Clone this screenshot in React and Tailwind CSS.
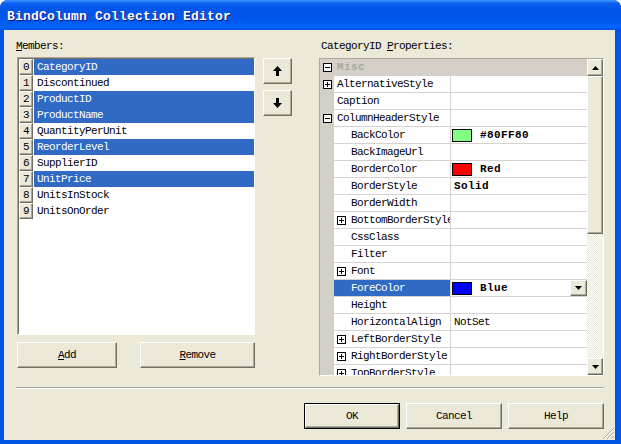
import React from 'react';

const mono = "font-['Liberation_Mono',monospace] text-[11px] tracking-[-0.6px]";
const raised =
  'border border-t-white border-l-white border-b-[#716f64] border-r-[#716f64] shadow-[inset_-1px_-1px_0_#aca899] bg-[#ece9d8]';

const members = [
  'CategoryID',
  'Discontinued',
  'ProductID',
  'ProductName',
  'QuantityPerUnit',
  'ReorderLevel',
  'SupplierID',
  'UnitPrice',
  'UnitsInStock',
  'UnitsOnOrder',
];
const selected = [0, 2, 3, 5, 7];

// level 0 = top-level, 1 = sub-property; exp: 'plus' | 'minus'
const props = [
  { name: 'AlternativeStyle', level: 0, exp: 'plus' },
  { name: 'Caption', level: 0 },
  { name: 'ColumnHeaderStyle', level: 0, exp: 'minus' },
  { name: 'BackColor', level: 1, swatch: '#80ff80', value: '#80FF80', bold: true },
  { name: 'BackImageUrl', level: 1 },
  { name: 'BorderColor', level: 1, swatch: '#ff0000', value: 'Red', bold: true },
  { name: 'BorderStyle', level: 1, value: 'Solid', bold: true },
  { name: 'BorderWidth', level: 1 },
  { name: 'BottomBorderStyle', level: 1, exp: 'plus' },
  { name: 'CssClass', level: 1 },
  { name: 'Filter', level: 1 },
  { name: 'Font', level: 1, exp: 'plus' },
  { name: 'ForeColor', level: 1, swatch: '#0000ff', value: 'Blue', bold: true, active: true },
  { name: 'Height', level: 1 },
  { name: 'HorizontalAlign', level: 1, value: 'NotSet' },
  { name: 'LeftBorderStyle', level: 1, exp: 'plus' },
  { name: 'RightBorderStyle', level: 1, exp: 'plus' },
  { name: 'TopBorderStyle', level: 1, exp: 'plus' },
];

const Expander = ({ type }) => (
  <svg width="9" height="9" viewBox="0 0 9 9" className="shrink-0">
    <rect x="0.5" y="0.5" width="8" height="8" fill="white" stroke="#000" />
    <line x1="2" y1="4.5" x2="7" y2="4.5" stroke="#000" />
    {type === 'plus' && <line x1="4.5" y1="2" x2="4.5" y2="7" stroke="#000" />}
  </svg>
);

const Tri = ({ down }) => (
  <svg width="7" height="4" viewBox="0 0 7 4">
    {down ? <polygon points="0,0 7,0 3.5,4" fill="#000" /> : <polygon points="0,4 7,4 3.5,0" fill="#000" />}
  </svg>
);

const Arrow = ({ down }) => (
  <svg width="9" height="10" viewBox="0 0 9 10" className={down ? 'rotate-180' : ''}>
    <polygon points="4.5,0 9,5 6,5 6,10 3,10 3,5 0,5" fill="#000" />
  </svg>
);

const Button = ({ children, className = '' }) => (
  <div className={`${raised} flex items-center justify-center ${mono} text-black ${className}`}>{children}</div>
);

const PropRow = ({ p }) => (
  <div className="flex h-[17px] shrink-0">
    <div className="w-[14px] bg-[#d4d0c8] flex items-center justify-center">
      {p.level === 0 && p.exp && <Expander type={p.exp} />}
    </div>
    <div
      className={`w-[117px] flex items-center pl-[3px] border-r border-b border-[#d6d3ce] whitespace-nowrap overflow-hidden ${
        p.active ? 'bg-[#316ac5] text-white' : 'bg-white text-black'
      }`}
    >
      {p.level === 1 && (
        <span className="w-[14px] shrink-0 flex">{p.exp && <Expander type={p.exp} />}</span>
      )}
      <span>{p.name}</span>
    </div>
    <div className="flex-1 flex items-center bg-white border-b border-[#d6d3ce] whitespace-nowrap overflow-hidden">
      {p.swatch && (
        <span className="ml-[1px] w-[20px] h-[13px] border border-black shrink-0" style={{ background: p.swatch }} />
      )}
      {p.value && (
        <span
          className={`${p.swatch ? 'ml-[8px]' : 'ml-[3px]'} ${p.bold ? 'font-bold tracking-[0.4px]' : ''}`}
        >
          {p.value}
        </span>
      )}
      {p.active && (
        <span className={`${raised} ml-auto w-[17px] h-[16px] flex items-center justify-center`}>
          <Tri down />
        </span>
      )}
    </div>
  </div>
);

export default function App() {
  return (
    <div className="w-[621px] h-[444px] bg-[#0054e3] rounded-t-[8px] flex flex-col overflow-hidden relative">
      {/* title bar */}
      <div className="h-[30px] shrink-0 flex items-center pl-[7px] pt-[3px] bg-[linear-gradient(180deg,#3d95ff_0%,#0a5ff0_12%,#0055ea_35%,#0058ee_70%,#0066ff_90%,#0050e0_100%)]">
        <span className="font-['Liberation_Mono',monospace] text-[13px] font-bold tracking-[0.2px] text-white [text-shadow:1px_1px_0_#0a1883]">
          BindColumn Collection Editor
        </span>
      </div>

      {/* body */}
      <div className={`mx-[4px] mr-[6px] mb-[4px] flex-1 bg-[#ece9d8] flex flex-col pl-[13px] pr-[11px] pt-[9px] ${mono} text-black`}>
        <div className="flex">
          {/* members column */}
          <div className="w-[238px] flex flex-col">
            <div className="h-[12px] leading-[12px] -ml-[1px] mt-[1px]">
              <span className="underline">M</span>embers:
            </div>
            <div className="mt-[5px] h-[278px] bg-white border border-t-[#aca899] border-l-[#aca899] border-b-white border-r-white shadow-[inset_1px_1px_0_#716f64] pt-[1px] pl-[1px]">
              {members.map((m, i) => {
                const sel = selected.includes(i);
                return (
                  <div key={m} className="flex h-[16px]">
                    <div className={`${raised} w-[14px] flex items-center justify-center text-black`}>{i}</div>
                    <div
                      className={`flex-1 ml-[1px] pl-[3px] flex items-center ${
                        sel ? 'bg-[#316ac5] text-white' : 'text-black'
                      }`}
                    >
                      {m}
                    </div>
                  </div>
                );
              })}
            </div>
            <div className="mt-[7px] flex justify-between">
              <Button className="w-[100px] h-[26px]">
                <span className="underline">A</span>dd
              </Button>
              <Button className="w-[115px] h-[26px]">
                <span className="underline">R</span>emove
              </Button>
            </div>
          </div>

          {/* up / down */}
          <div className="ml-[8px] w-[29px] flex flex-col gap-[6px] pt-[19px]">
            <Button className="h-[26px]">
              <Arrow />
            </Button>
            <Button className="h-[26px]">
              <Arrow down />
            </Button>
          </div>

          {/* property grid */}
          <div className="ml-[27px] w-[285px] flex flex-col">
            <div className="h-[12px] leading-[12px] ml-[2px] mt-[1px]">
              CategoryID <span className="underline">P</span>roperties:
            </div>
            <div className="mt-[6px] h-[318px] border border-[#aca899] border-b-white border-r-white flex overflow-hidden">
              <div className="flex-1 flex flex-col overflow-hidden">
                <div className="h-[17px] shrink-0 bg-[#d4d0c8] flex items-center">
                  <span className="w-[14px] flex justify-center">
                    <Expander type="minus" />
                  </span>
                  <span className="ml-[3px] font-bold tracking-[0.4px] text-[#aaa79c]">Misc</span>
                </div>
                {props.map((p) => (
                  <PropRow key={p.name} p={p} />
                ))}
              </div>
              {/* scrollbar */}
              <div className="w-[16px] flex flex-col bg-[#f4f3ee]">
                <div className={`${raised} h-[17px] flex items-center justify-center`}>
                  <Tri />
                </div>
                <div className={`${raised} h-[158px]`} />
                <div className="flex-1 bg-[repeating-conic-gradient(#ece9d8_0%_25%,#fcfcf9_0%_50%)] bg-[length:2px_2px]" />
                <div className={`${raised} h-[17px] flex items-center justify-center`}>
                  <Tri down />
                </div>
              </div>
            </div>
          </div>
        </div>

        {/* separator */}
        <div className="mt-[11px] -ml-[1px] h-[2px] border-t border-[#aca899] border-b border-b-white" />

        {/* dialog buttons */}
        <div className="mt-[14px] flex justify-end gap-[6px]">
          <div className="w-[96px] h-[26px] border border-black flex">
            <Button className="flex-1">OK</Button>
          </div>
          <Button className="w-[96px] h-[26px]">Cancel</Button>
          <Button className="w-[96px] h-[26px]">Help</Button>
        </div>
      </div>

      {/* size grip */}
      <svg width="12" height="12" viewBox="0 0 12 12" className="absolute right-[7px] bottom-[5px]">
        {[3, 7, 11].map((o) => (
          <g key={o}>
            <line x1={12 - o} y1="12" x2="12" y2={12 - o} stroke="#aca899" />
            <line x1={12 - o + 1} y1="12" x2="12" y2={12 - o + 1} stroke="#fff" />
          </g>
        ))}
      </svg>
    </div>
  );
}
